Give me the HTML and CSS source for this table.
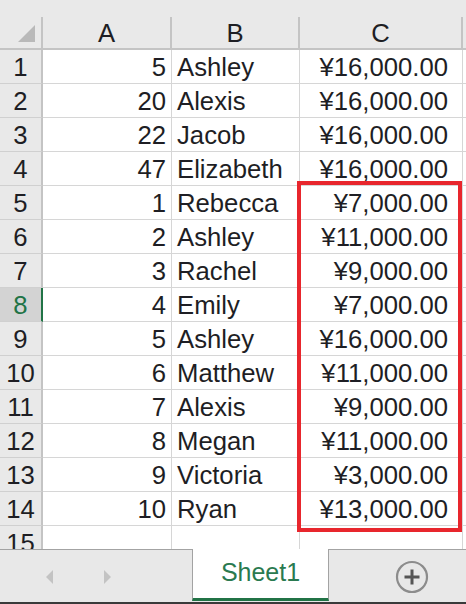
FILE: index.html
```html
<!DOCTYPE html>
<html>
<head>
<meta charset="utf-8">
<link rel="stylesheet" href="styles.css">
</head>
<body>
<div class="sheet">
  <div class="band"></div>
  <div class="grid">
    <div class="corner"><span class="tri"></span></div>
    <div class="ch">A</div><div class="ch">B</div><div class="ch">C</div><div class="ch last"></div>

    <div class="rh">1</div><div class="c num">5</div><div class="c txt">Ashley</div><div class="c cur">¥16,000.00</div><div class="c last"></div>
    <div class="rh">2</div><div class="c num">20</div><div class="c txt">Alexis</div><div class="c cur">¥16,000.00</div><div class="c last"></div>
    <div class="rh">3</div><div class="c num">22</div><div class="c txt">Jacob</div><div class="c cur">¥16,000.00</div><div class="c last"></div>
    <div class="rh">4</div><div class="c num">47</div><div class="c txt">Elizabeth</div><div class="c cur">¥16,000.00</div><div class="c last"></div>
    <div class="rh">5</div><div class="c num">1</div><div class="c txt">Rebecca</div><div class="c cur">¥7,000.00</div><div class="c last"></div>
    <div class="rh">6</div><div class="c num">2</div><div class="c txt">Ashley</div><div class="c cur">¥11,000.00</div><div class="c last"></div>
    <div class="rh">7</div><div class="c num">3</div><div class="c txt">Rachel</div><div class="c cur">¥9,000.00</div><div class="c last"></div>
    <div class="rh active">8</div><div class="c num">4</div><div class="c txt">Emily</div><div class="c cur">¥7,000.00</div><div class="c last"></div>
    <div class="rh">9</div><div class="c num">5</div><div class="c txt">Ashley</div><div class="c cur">¥16,000.00</div><div class="c last"></div>
    <div class="rh">10</div><div class="c num">6</div><div class="c txt">Matthew</div><div class="c cur">¥11,000.00</div><div class="c last"></div>
    <div class="rh">11</div><div class="c num">7</div><div class="c txt">Alexis</div><div class="c cur">¥9,000.00</div><div class="c last"></div>
    <div class="rh">12</div><div class="c num">8</div><div class="c txt">Megan</div><div class="c cur">¥11,000.00</div><div class="c last"></div>
    <div class="rh">13</div><div class="c num">9</div><div class="c txt">Victoria</div><div class="c cur">¥3,000.00</div><div class="c last"></div>
    <div class="rh">14</div><div class="c num">10</div><div class="c txt">Ryan</div><div class="c cur">¥13,000.00</div><div class="c last"></div>
    <div class="rh">15</div><div class="c num"></div><div class="c txt"></div><div class="c cur"></div><div class="c last"></div>
  </div>
  <div class="redbox"></div>
</div>
<div class="tabbar">
  <div class="nav">
    <svg class="arrow" width="8" height="14" viewBox="0 0 8 14"><polygon points="7,0 7,14 0,7" fill="#c3c3c3"/></svg>
    <svg class="arrow" width="8" height="14" viewBox="0 0 8 14"><polygon points="1,0 1,14 8,7" fill="#c3c3c3"/></svg>
  </div>
  <div class="tab">Sheet1</div>
  <div class="rest">
    <svg class="plus" width="34" height="34" viewBox="0 0 34 34">
      <circle cx="17" cy="17" r="15" fill="none" stroke="#8c8c8c" stroke-width="2.2"/>
      <path d="M17 9.5 V24.5 M9.5 17 H24.5" stroke="#555" stroke-width="3"/>
    </svg>
  </div>
</div>
</body>
</html>
```

FILE: styles.css
```css
html, body {
  margin: 0;
  padding: 0;
}
body {
  width: 466px;
  height: 604px;
  overflow: hidden;
  background: #ffffff;
  font-family: "Liberation Sans", Arial, sans-serif;
  color: #1e1e24;
}
.sheet {
  position: relative;
  height: 549px;
  overflow: hidden;
}
.band {
  height: 17px;
  background: #e9e9e9;
}
.grid {
  display: grid;
  grid-template-columns: 43px 129px 128px 163px 1fr;
  grid-template-rows: 33px repeat(15, 34px);
  font-size: 25.7px;
}
.grid > div {
  box-sizing: border-box;
  display: flex;
  align-items: center;
  white-space: nowrap;
  overflow: hidden;
  padding-top: 1px;
}
.corner {
  background: #e9e9e9;
  border-right: 2px solid #c4c4c4;
  border-bottom: 2px solid #c4c4c4;
  position: relative;
}
.tri {
  position: absolute;
  right: 6px;
  bottom: 6px;
  width: 0;
  height: 0;
  border-left: 17px solid transparent;
  border-bottom: 17px solid #b9b9b9;
}
.ch {
  background: #e9e9e9;
  justify-content: center;
  border-right: 2px solid #c4c4c4;
  border-bottom: 2px solid #c4c4c4;
}
.ch.last {
  border-right: none;
}
.rh {
  background: #e9e9e9;
  justify-content: center;
  border-right: 2px solid #c4c4c4;
  border-bottom: 1px solid #d0d0d0;
}
.rh.active {
  background: #d3d3d3;
  color: #217346;
  border-right: 2px solid #217346;
}
.c {
  border-right: 1px solid #d6d6d6;
  border-bottom: 1px solid #d6d6d6;
}
.c.last {
  border-right: none;
}
.num {
  justify-content: flex-end;
  padding-right: 5px;
}
.txt {
  justify-content: flex-start;
  padding-left: 5px;
}
.cur {
  justify-content: flex-end;
  padding-right: 14px;
}
.redbox {
  position: absolute;
  left: 297px;
  top: 181px;
  width: 165px;
  height: 351px;
  box-sizing: border-box;
  border: 4px solid #e8262d;
}
.tabbar {
  display: flex;
  height: 55px;
  box-sizing: border-box;
  border-bottom: 2px solid #3a3a3a;
  background: #e8e8e8;
}
.nav {
  width: 192px;
  border-top: 1px solid #a3a3a3;
  display: flex;
  align-items: center;
  gap: 49px;
  padding-left: 46px;
  box-sizing: border-box;
}
.arrow {
  display: block;
  margin-top: 2px;
}
.tab {
  width: 137px;
  box-sizing: border-box;
  background: #ffffff;
  border-left: 1px solid #a3a3a3;
  border-right: 1px solid #a3a3a3;
  border-bottom: 3px solid #217346;
  margin-bottom: 1px;
  color: #2a7a50;
  font-size: 25px;
  display: flex;
  align-items: center;
  justify-content: center;
  padding-bottom: 3px;
}
.rest {
  flex: 1;
  border-top: 1px solid #a3a3a3;
  display: flex;
  align-items: center;
  padding-left: 66px;
}
.plus {
  display: block;
  margin-top: 2px;
}
```
